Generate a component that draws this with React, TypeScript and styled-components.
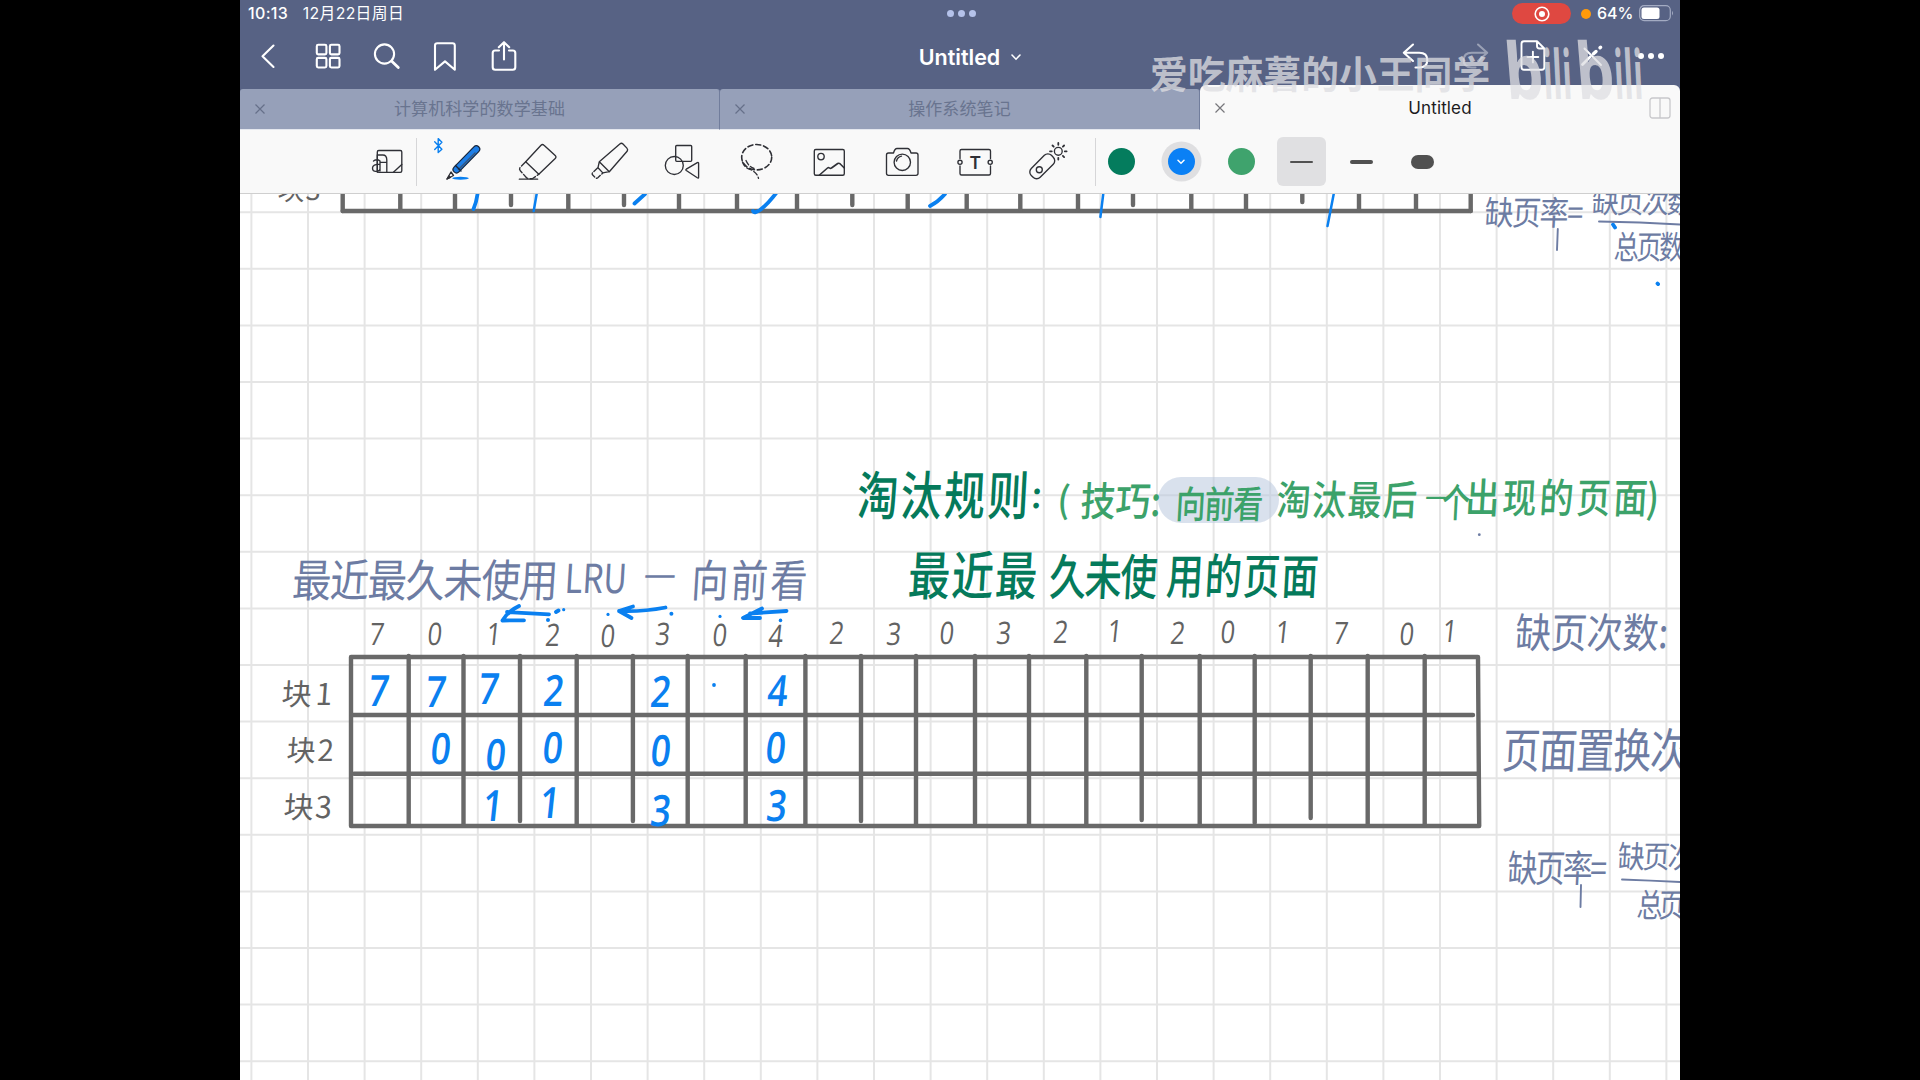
import React from "react";
import styled, { createGlobalStyle } from "styled-components";

const UI = `Inter, "Noto Sans CJK SC", sans-serif`;
const INK = { slate: "#6d7ca3", grey: "#636363", green: "#057a5b", leaf: "#3ca26a", blue: "#0a80f0" };

const Global = createGlobalStyle`
  html, body { margin: 0; background: #000; }
  *, *::before, *::after { box-sizing: border-box; }
`;

const Stage = styled.div`
  width: 1920px;
  height: 1080px;
  display: flex;
  justify-content: center;
  background: #000;
  overflow: hidden;
  font-family: ${UI};
`;
const Tablet = styled.main`
  position: relative;
  width: 1440px;
  height: 1080px;
  display: flex;
  flex-direction: column;
  background: #fff;
  overflow: hidden;
`;
const Header = styled.header`
  height: 130px;
  flex: none;
  display: flex;
  flex-direction: column;
  background: #576284;
  color: #fff;
`;
const StatusBar = styled.div`
  height: 27px;
  display: grid;
  grid-template-columns: 1fr auto 1fr;
  align-items: center;
  padding: 0 6px 0 8px;
  font-size: 16px;
  font-weight: 500;
  line-height: 27px;
`;
const Clock = styled.div`
  display: flex;
  gap: 14.5px;
  letter-spacing: 0.35px;
`;
const DateText = styled.span`
  font-weight: 400;
  font-size: 15.8px;
`;
const Dots = styled.div`
  display: flex;
  gap: 4px;
`;
const Dot = styled.i<{ $size: number; $color: string }>`
  width: ${(p) => p.$size}px;
  height: ${(p) => p.$size}px;
  border-radius: 50%;
  background: ${(p) => p.$color};
`;
const Indicators = styled.div`
  display: flex;
  justify-content: flex-end;
  align-items: center;
`;
const Recording = styled.div`
  width: 59px;
  height: 21px;
  border-radius: 11px;
  background: #df4841;
  display: grid;
  place-items: center;
  margin-right: 10px;
`;
const Percent = styled.span`
  margin: 0 6px 0 6px;
  width: 36px;
  white-space: nowrap;
`;
const NavBar = styled.nav`
  height: 58px;
  display: grid;
  grid-template-columns: 1fr auto 1fr;
  align-items: center;
`;
const NavGroup = styled.div<{ $end?: boolean }>`
  display: flex;
  justify-content: ${(p) => (p.$end ? "flex-end" : "flex-start")};
`;
const NavButton = styled.div<{ $dim?: boolean }>`
  width: 58.7px;
  height: 58px;
  flex: none;
  display: grid;
  place-items: center;
  opacity: ${(p) => (p.$dim ? 0.4 : 1)};
`;
const Title = styled.h1`
  margin: 2px 0 0 20px;
  display: flex;
  align-items: center;
  gap: 11px;
  font-size: 21.5px;
  font-weight: 600;
  line-height: 56px;
`;
const Tabs = styled.div`
  height: 45px;
  display: flex;
  align-items: flex-end;
`;
const Tab = styled.div<{ $active?: boolean }>`
  width: 480px;
  height: ${(p) => (p.$active ? 45 : 41)}px;
  display: grid;
  grid-template-columns: 40px 1fr 40px;
  align-items: center;
  justify-items: center;
  border-radius: ${(p) => (p.$active ? "6px 6px 0 0" : "3px 3px 0 0")};
  border-right: ${(p) => (p.$active ? "none" : "1px solid #717d9c")};
  border-bottom: ${(p) => (p.$active ? "none" : "1px solid #e4e7ee")};
  background: ${(p) => (p.$active ? "#f9f9f9" : "#96a0b9")};
  color: ${(p) => (p.$active ? "#1b1b1d" : "#69748f")};
  font-size: 17px;
  letter-spacing: 0.12px;
  line-height: 30px;
  padding-top: ${(p) => (p.$active ? 1 : 0)}px;
`;
const Toolbar = styled.div`
  height: 64px;
  flex: none;
  display: flex;
  align-items: center;
  padding-left: 120px;
  background: #f9f9f9;
  border-bottom: 1.5px solid #cfcfcf;
`;
const Tool = styled.div<{ $w: number }>`
  width: ${(p) => p.$w}px;
  height: 48px;
  flex: none;
  display: grid;
  place-items: center;
  margin-top: 1px;
`;
const Divider = styled.i<{ $l: number; $r: number }>`
  width: 1px;
  height: 48px;
  background: #d6d6d8;
  margin: 0 ${(p) => p.$r}px 0 ${(p) => p.$l}px;
`;
const Option = styled.div<{ $selected?: boolean }>`
  width: 49px;
  height: 49px;
  flex: none;
  margin-right: 11.2px;
  display: grid;
  place-items: center;
  border-radius: 6px;
  background: ${(p) => (p.$selected ? "#e0e0e2" : "transparent")};
`;
const Swatch = styled.i<{ $c: string; $ring?: boolean }>`
  width: 27px;
  height: 27px;
  border-radius: 50%;
  background: ${(p) => p.$c};
  box-shadow: ${(p) => (p.$ring ? "0 0 0 6.5px #dfdfe1" : "none")};
  display: grid;
  place-items: center;
`;
const Stroke = styled.i<{ $h: number }>`
  width: 23px;
  height: ${(p) => p.$h}px;
  border-radius: 8px;
  background: #515151;
`;
const Canvas = styled.section`
  position: relative;
  flex: 1;
  overflow: hidden;
  background: #fff;
`;
const Sheet = styled.svg`
  position: absolute;
  left: 0;
  top: 0;
  display: block;
`;
const Highlight = styled.div`
  position: absolute;
  left: 918px;
  top: 283px;
  width: 121px;
  height: 46px;
  border-radius: 23px;
  background: rgba(186, 200, 222, 0.55);
`;
/* Handwritten notes sit freely on the page; $x is the left edge, $y the vertical centre. */
const Note = styled.span<{ $x: number; $y: number; $size: number; $pitch?: number; $sx?: number; $sy?: number; $c: string; $w?: number; $skew?: number }>`
  position: absolute;
  left: ${(p) => p.$x - 240}px;
  top: ${(p) => p.$y - 196.5}px;
  font-family: "Noto Sans CJK SC", sans-serif;
  font-size: ${(p) => p.$size}px;
  line-height: 1;
  white-space: nowrap;
  font-weight: ${(p) => p.$w ?? 400};
  letter-spacing: ${(p) => (p.$pitch ? p.$pitch - p.$size : 0)}px;
  color: ${(p) => p.$c};
  transform-origin: 0 0;
  transform: scale(${(p) => p.$sx ?? 1}, ${(p) => p.$sy ?? 1}) translateY(-50%) skewX(${(p) => p.$skew ?? -4}deg);
`;
const Digit = styled.span<{ $x: number; $y: number; $size: number; $c: string; $w: number }>`
  position: absolute;
  left: ${(p) => p.$x - 240}px;
  top: ${(p) => p.$y - 195.5}px;
  font-family: "Open Sans", "Noto Sans", sans-serif;
  font-size: ${(p) => p.$size}px;
  font-weight: ${(p) => p.$w};
  line-height: 1;
  color: ${(p) => p.$c};
  transform: translate(-50%, -50%) skewX(-6deg) scaleX(0.82);
`;
const Watermark = styled.div`
  position: absolute;
  left: 910px;
  top: 33px;
  color: rgba(222, 222, 226, 0.76);
  font-family: "Noto Sans CJK SC", sans-serif;
  font-weight: 700;
  font-size: 37.8px;
  line-height: 78px;
  white-space: nowrap;
`;
const Brand = styled.div`
  position: absolute;
  left: 1266px;
  top: 34px;
  display: flex;
  align-items: baseline;
  color: rgba(222, 222, 226, 0.76);
  font-family: "Open Sans", sans-serif;
  font-weight: 700;
  line-height: 70px;
`;
const BrandPart = styled.span<{ $size: number; $sx: number; $w: number }>`
  display: block;
  width: ${(p) => p.$w}px;
  font-size: ${(p) => p.$size}px;
  transform-origin: 0 78%;
  transform: scaleX(${(p) => p.$sx}) skewX(6deg);
`;

const NavIcon = ({ children }: { children: React.ReactNode }) => (
  <svg width="34" height="34" viewBox="0 0 34 34" fill="none" stroke="#fff" strokeWidth="2.1" strokeLinecap="round" strokeLinejoin="round">
    {children}
  </svg>
);
const ToolIcon = ({ children }: { children: React.ReactNode }) => (
  <svg width="48" height="48" viewBox="0 0 48 48" fill="none" stroke="#2f3036" strokeWidth="1.35" strokeLinecap="round" strokeLinejoin="round" overflow="visible">
    {children}
  </svg>
);
const Close = ({ color }: { color: string }) => (
  <svg width="10" height="10" viewBox="0 0 10 10" stroke={color} strokeWidth="1.2">
    <path d="M.5.5l9 9M9.5.5l-9 9" />
  </svg>
);

const gridX = Array.from({ length: 26 }, (_, i) => 251.4 + i * 56.6);
const gridY = Array.from({ length: 16 }, (_, i) => 212.2 + i * 56.6);
const cols: [number, number][] = [
  [408.7, 825], [463.5, 825], [520, 821], [576.7, 825], [632.9, 821], [687.7, 825], [745.7, 825], [805.4, 825], [861, 821], [916, 825],
  [975, 823], [1029, 825], [1086.3, 825], [1141.7, 820], [1199.7, 825], [1254.7, 823], [1310.7, 818], [1367.7, 825], [1424.7, 825],
];
const upperCols: [number, number][] = [
  [342.7, 211], [400.3, 210], [455, 210], [511, 205], [568.3, 210], [624, 205], [679, 210], [737, 210], [797, 210], [852.3, 205], [907.7, 210],
  [966.7, 210], [1020.3, 210], [1078, 210], [1133, 205], [1191.3, 210], [1246, 210], [1302.3, 202], [1359, 210], [1416, 210], [1470.7, 211],
];
const dots: [number, number, number][] = [
  [563.7, 609.7, 1.6], [548, 620, 2], [608, 614.4, 1.6], [671.4, 613.7, 2], [720, 616.4, 1.6], [780.5, 620.4, 1.8], [714, 685, 1.9],
];
const header: [string, number, number][] = [
  ["7", 377, 634], ["0", 435, 634], ["1", 494, 634], ["2", 553, 635], ["0", 608, 636], ["3", 663, 634], ["0", 720, 635], ["4", 776, 636],
  ["2", 837, 633], ["3", 894, 634], ["0", 947, 633], ["3", 1004, 633], ["2", 1061, 632], ["1", 1115, 631], ["2", 1178, 633], ["0", 1228, 632],
  ["1", 1283, 632], ["7", 1341, 633], ["0", 1407, 634], ["1", 1450, 631],
];
const filled: [string, number, number][] = [
  ["7", 379, 690], ["7", 436, 691], ["7", 489, 688], ["2", 554, 690], ["2", 661, 691], ["4", 778, 690],
  ["0", 441, 748], ["0", 496, 754], ["0", 553, 747], ["0", 661, 750], ["0", 776, 747],
  ["1", 493, 805], ["1", 550, 802], ["3", 661, 810], ["3", 777, 805],
];

export default function App() {
  return (
    <Stage>
      <Global />
      <Tablet>
        <Header>
          <StatusBar>
            <Clock><span>10:13</span><DateText>12月22日周日</DateText></Clock>
            <Dots><Dot $size={7} $color="#b5c2ea" /><Dot $size={7} $color="#b5c2ea" /><Dot $size={7} $color="#b5c2ea" /></Dots>
            <Indicators>
              <Recording>
                <svg width="16" height="16" viewBox="0 0 16 16"><circle cx="8" cy="8" r="6.8" fill="none" stroke="#fff" strokeWidth="1.6" /><circle cx="8" cy="8" r="3" fill="#fff" /></svg>
              </Recording>
              <Dot $size={10} $color="#ff9a0a" />
              <Percent>64%</Percent>
              <svg width="35" height="17" viewBox="0 0 35 17">
                <rect x=".7" y=".7" width="30.6" height="15" rx="4.5" fill="none" stroke="#a3abc2" strokeWidth="1.2" />
                <rect x="2.5" y="2.5" width="18" height="11.4" rx="2.5" fill="#fff" />
                <path d="M33 5.8q2 2.4 0 4.8z" fill="#a3abc2" />
              </svg>
            </Indicators>
          </StatusBar>
          <NavBar>
            <NavGroup>
              <NavButton><NavIcon><path d="M21.500 6.500L10.500 17.300l11 10.700" /></NavIcon></NavButton>
              <NavButton><NavIcon><rect x="5.8" y="5.8" width="9.600" height="9.600" rx="1.400" /><rect x="18.900" y="5.800" width="9.600" height="9.600" rx="1.400" /><rect x="5.800" y="18.900" width="9.600" height="9.600" rx="1.400" /><rect x="18.900" y="18.900" width="9.600" height="9.600" rx="1.400" /></NavIcon></NavButton>
              <NavButton><NavIcon><circle cx="14.500" cy="15" r="9.600" /><path d="M21.800 22.300l6.500 6.300" strokeWidth="2.800" /></NavIcon></NavButton>
              <NavButton><NavIcon><path d="M7 6.500q0-2.300 2.300-2.300h15.200q2.300 0 2.300 2.300v24.300L17 22.400 7 30.800z" /></NavIcon></NavButton>
              <NavButton><NavIcon><path d="M12 11.500H8.200q-2.500 0-2.500 2.500v14.200q0 2.500 2.500 2.500h17.600q2.500 0 2.500-2.500V14q0-2.500-2.500-2.500H22M17 20.500V3.500M11.800 8.200L17 3.200l5.200 5" /></NavIcon></NavButton>
            </NavGroup>
            <Title>Untitled<svg width="10" height="7" viewBox="0 0 10 7" fill="none" stroke="#fff" strokeWidth="1.6" strokeLinecap="round"><path d="M1 1l4 4.200 4-4.200" /></svg></Title>
            <NavGroup $end>
              <NavButton><NavIcon><path d="M14 5.500L4.800 13.800 14 22M5.500 13.800h14.800q8 0 8 7.200t-8 7.500h-3.800" /></NavIcon></NavButton>
              <NavButton $dim><NavIcon><path d="M20 5.500l9.200 8.300L20 22M28.500 13.800H13.700q-8 0-8 7.200t8 7.500h3.800" /></NavIcon></NavButton>
              <NavButton><NavIcon><path d="M8 2.200h13l7.300 7.300v18.800q0 2.500-2.500 2.500H8q-2.500 0-2.500-2.500V4.700q0-2.500 2.500-2.500zM21 2.200v4.800q0 2.500 2.500 2.500h4.800M16.900 12.600v10.800M11.500 18h10.800" strokeWidth="1.900" /></NavIcon></NavButton>
              <NavButton><NavIcon><path d="M9.500 9.500l16.500 16.500" strokeWidth="1.900" /><path d="M7.500 25.500l7.500-7.500" strokeWidth="2.800" /><path d="M18.500 14.800l2.500-2.300M25 8.800l.6-.6" strokeWidth="3.400" /></NavIcon></NavButton>
              <NavButton><Dots><Dot $size={6} $color="#fff" /><Dot $size={6} $color="#fff" /><Dot $size={6} $color="#fff" /></Dots></NavButton>
            </NavGroup>
          </NavBar>
          <Tabs>
            <Tab><Close color="#667089" /><span>计算机科学的数学基础</span></Tab>
            <Tab><Close color="#667089" /><span>操作系统笔记</span></Tab>
            <Tab $active>
              <Close color="#77777b" />
              <span>Untitled</span>
              <svg width="22" height="22" viewBox="0 0 22 22" fill="none" stroke="#c8c8cb" strokeWidth="1.300"><rect x="1" y="1" width="20" height="20" rx="2.500" /><path d="M11 1v20" /></svg>
            </Tab>
          </Tabs>
        </Header>

        <Toolbar>
          <Tool $w={54}>
            <ToolIcon>
              <rect x="14.300" y="12.500" width="24.500" height="21.800" rx="1.500" />
              <path d="M14.300 17h5.500q4 0 4 5v12.300M14.300 34.300V17M10.500 23q3.500-2.500 6.500 0M17 24.300h6.500M17 23v10M17 26.500q-7.500-.5-7.500 3.500 0 3.800 4 3.300t3.500-3.300M38.800 26.500l-8.400 7.800" />
            </ToolIcon>
          </Tool>
          <Divider $l={2} $r={10} />
          <Tool $w={73.1}>
            <ToolIcon>
              <path d="M-5.300 3.800l7.200 7.400-3.700 3.400V.600L1.900 4.300l-7.200 7.200" stroke="#0a80f0" strokeWidth="1.400" />
              <ellipse cx="20.500" cy="40.300" rx="8.300" ry="1.500" fill="#0a80f0" stroke="none" />
              <path d="M16.500 31.500L36.300 11.200" stroke="#17263c" strokeWidth="8" />
              <path d="M16.500 31.500L36.300 11.200" stroke="#1d7ee6" strokeWidth="5.600" />
              <path d="M18.500 31.500L35 15" stroke="#36557b" strokeWidth="1.500" />
              <path d="M15.500 27.500l5.500 5.500" stroke="#17263c" />
              <path d="M11 34l-4 7 6.500-3.500z" fill="#fff" /><path d="M9 38l-2 3 3.500-1.500z" fill="#222" />
            </ToolIcon>
          </Tool>
          <Tool $w={73.1}>
            <ToolIcon>
              <path d="M12.700 23.700L28 7.200q1.500-1.500 3 0l11.200 10.300q1.500 1.400 0 3L25.800 36.300z" />
              <path d="M12.700 23.700l-5.400 5.500q-1.500 1.800 0 3.500l6 6.800q1 1.200 3 1.200h3l6.500-4.400" strokeDasharray="6 2.200" />
              <path d="M6.300 41.200h18.400" strokeWidth="1.200" />
            </ToolIcon>
          </Tool>
          <Tool $w={73.1}>
            <ToolIcon>
              <path d="M13.300 23.700L33.800 6q1.700-1.400 3.200.1l3.900 4q1.400 1.500.2 3.200L23.300 33.700l-10-10zM13.300 23.700l-1.300 6 4.800 5.200 6.500-1.200" />
              <path d="M11.500 30l-5 4.800q-.8 1 0 2l3 3q1.200 1 2.300 0l4.800-4.600" strokeDasharray="5 2" />
            </ToolIcon>
          </Tool>
          <Tool $w={73.1}>
            <ToolIcon><rect x="16.700" y="7.500" width="16" height="15.800" rx="1" /><circle cx="15.300" cy="27.500" r="9" /><path d="M27.300 31.200l11-6.600q1.300-.6 1.300.8v13.800q0 1.400-1.300.6l-11-7.300q-.9-.7 0-1.300z" /></ToolIcon>
          </Tool>
          <Tool $w={73.1}>
            <ToolIcon><ellipse cx="24.700" cy="19.200" rx="15" ry="12.700" strokeDasharray="5 3" strokeWidth="1.600" /><path d="M10.500 24q2 6 8 7.500 6.500 3 8 8.800M14 22.500q2.500 6 8 8" strokeDasharray="5 2.500" /></ToolIcon>
          </Tool>
          <Tool $w={73.1}>
            <ToolIcon><rect x="9.300" y="11.500" width="30" height="25.700" rx="1.500" /><circle cx="16" cy="18.600" r="3.200" /><path d="M14.500 37l8-7q1-.8 2 0t2 0l6.200-4.500q1.200-.7 2.300.2l4.300 4.300" strokeWidth="1.600" /></ToolIcon>
          </Tool>
          <Tool $w={73.1}>
            <ToolIcon><path d="M8.500 17q0-2 2-2h5q1.300-4.500 3.500-4.500h10.500q2.200 0 3.500 4.500h5q2 0 2 2v18.500q0 1.800-2 1.800H10.500q-2 0-2-1.800z" /><circle cx="24.300" cy="24.300" r="8.200" /><path d="M18.500 23q1-4 5-4.800" /></ToolIcon>
          </Tool>
          <Tool $w={73.1}>
            <ToolIcon>
              <path d="M9 20.500V13q0-1.500 1.500-1.500H38q1.500 0 1.500 1.500v7.500M9 28v7.500q0 1.500 1.500 1.500H38q1.500 0 1.500-1.500V28" />
              <circle cx="9" cy="24.300" r="2.100" /><circle cx="39.200" cy="24.300" r="2.100" />
              <text x="24.200" y="30.600" textAnchor="middle" fontSize="17.500" fontWeight="600" fontFamily="Inter, sans-serif" fill="#2f3036" stroke="none">T</text>
            </ToolIcon>
          </Tool>
          <Tool $w={73.1}>
            <ToolIcon>
              <rect x="4" y="22" width="28.500" height="12.600" rx="5" transform="rotate(-45 18.300 28.300)" /><circle cx="15.300" cy="31.700" r="3" />
              <circle cx="34.300" cy="13.300" r="3.900" /><path d="M34.300 6.800V5M34.300 21.600v-1.800M26 13.300h1.800M40.800 13.300h1.800M28.500 7.500l1.200 1.200M40.100 7.500l-1.200 1.200M40.100 19.100l-1.200-1.200" strokeWidth="1.800" />
            </ToolIcon>
          </Tool>
          <Divider $l={10} $r={0.8} />
          <Option><Swatch $c="#047c5d" /></Option>
          <Option><Swatch $c="#0a80f5" $ring><svg width="8" height="6" viewBox="0 0 8 6" fill="none" stroke="#fff" strokeWidth="1.500" strokeLinecap="round"><path d="M1 1.200l3 3 3-3" /></svg></Swatch></Option>
          <Option><Swatch $c="#3fa36d" /></Option>
          <Option $selected><Stroke $h={2} /></Option>
          <Option><Stroke $h={4} /></Option>
          <Option><Stroke $h={14} /></Option>
        </Toolbar>

        <Canvas>
          <Sheet width="1440" height="886" viewBox="240 194 1440 886" fill="none">
            <g stroke="#e5e5e5" strokeWidth="2">
              {gridX.map((x) => <path key={x} d={`M${x} 194V1080`} />)}
              {gridY.map((y) => <path key={y} d={`M240 ${y}H1680`} />)}
            </g>
            <g stroke="#696969" strokeWidth="4.400" strokeLinecap="round" strokeLinejoin="round">
              <path d="M342.700 211H1470.700" />
              {upperCols.map(([x, y]) => <path key={x} d={`M${x} 190V${y}`} />)}
              <path d="M351 657H1478L1479.200 826H351z" />
              <path d="M352 715H1473M354 773.800H1478" />
              {cols.map(([x, y]) => <path key={x} d={`M${x} 656V${y}`} />)}
            </g>
            <g stroke={INK.blue} strokeWidth="3.800" strokeLinecap="round" strokeLinejoin="round">
              <path d="M478 190Q477 201 473.500 209M777 192Q768 204 760 210 754 214 753 211M645 194L634.500 203.500M945 194Q938 202 930 206" />
              <path d="M537 192L533.700 211M1103.500 192L1100.400 217M1334.500 190L1327.500 226" strokeWidth="2.500" />
              <path d="M549 614.400L507 612M519 606Q508 611 502.500 620.500L524 620.300" />
              <path d="M665.500 607.500Q642 612 619 611M633 606.500L619 611 631.500 618" />
              <path d="M786.500 611L750 613.500M762 608.500L743 618H760" />
              <path d="M556 612l2.500-1.500M1613 224.500l2 3M1657.500 283.500l.6.600" />
            </g>
            <g fill={INK.blue}>{dots.map(([x, y, r]) => <circle key={x} cx={x} cy={y} r={r} />)}</g>
            <circle cx="1479.300" cy="534.700" r="1.400" fill={INK.slate} />
            <path d="M1599 221.500Q1640 222 1680 224.500M1622 879.500Q1650 880.500 1680 882M1557.800 229L1557 250M1581 885L1580.500 907" stroke={INK.slate} strokeWidth="1.900" strokeLinecap="round" />
          </Sheet>
          <Highlight />

          <Note $x={279} $y={190} $size={27} $pitch={28} $c={INK.grey}>块3</Note>
          <Note $x={1486} $y={213} $size={29} $pitch={27.5} $sy={1.15} $c={INK.slate}>缺页率=</Note>
          <Note $x={1593} $y={202} $size={27} $pitch={25} $sy={1.1} $c={INK.slate}>缺页次数</Note>
          <Note $x={1615} $y={247} $size={25} $pitch={22.5} $sy={1.3} $c={INK.slate}>总页数</Note>

          <Note $x={859} $y={495} $size={41} $pitch={43.5} $sy={1.28} $w={500} $c={INK.green}>淘汰规则</Note>
          <Note $x={1033} $y={494} $size={36} $w={500} $c={INK.green}>:</Note>
          <Note $x={1059} $y={499} $size={36} $w={500} $c={INK.leaf}>(</Note>
          <Note $x={1082} $y={500} $size={35} $pitch={35} $sy={1.15} $w={500} $c={INK.leaf}>技巧:</Note>
          <Note $x={1177} $y={504} $size={30} $pitch={28.7} $sy={1.25} $w={500} $c={INK.leaf}>向前看</Note>
          <Note $x={1278} $y={500} $size={34} $pitch={35.5} $sy={1.2} $w={500} $c={INK.leaf}>淘汰最后</Note>
          <Note $x={1426} $y={499} $size={21} $w={500} $c={INK.leaf}>一</Note>
          <Note $x={1443} $y={502} $size={28} $sy={1.4} $w={500} $c={INK.leaf}>个</Note>
          <Note $x={1467} $y={498} $size={34} $pitch={37} $sy={1.2} $w={500} $c={INK.leaf}>出现的页面</Note>
          <Note $x={1648} $y={497} $size={36} $sy={1.1} $w={500} $c={INK.leaf}>)</Note>
          <Note $x={910} $y={574} $size={42} $pitch={43.5} $sy={1.25} $w={500} $c={INK.green}>最近最</Note>
          <Note $x={1051} $y={577} $size={37} $pitch={35.5} $sy={1.32} $w={500} $c={INK.green}>久未使</Note>
          <Note $x={1168} $y={576} $size={37} $pitch={38.3} $sy={1.3} $w={500} $c={INK.green}>用的页面</Note>

          <Note $x={294} $y={580} $size={39} $pitch={37.8} $sy={1.15} $c={INK.slate}>最近最久未使用</Note>
          <Note $x={566} $y={578} $size={40} $sx={0.82} $c={INK.slate}>LRU</Note>
          <Note $x={645} $y={577} $size={32} $c={INK.slate}>一</Note>
          <Note $x={693} $y={580} $size={37} $pitch={39.5} $sy={1.2} $c={INK.slate}>向前看</Note>

          {header.map(([t, x, y]) => <Digit key={x} $x={x} $y={y} $size={31} $w={400} $c={INK.grey}>{t}</Digit>)}
          <Note $x={283} $y={694} $size={30} $pitch={34} $c={INK.grey}>块1</Note>
          <Note $x={288} $y={750} $size={29} $pitch={31} $c={INK.grey}>块2</Note>
          <Note $x={285} $y={807} $size={30} $pitch={31.5} $c={INK.grey}>块3</Note>
          {filled.map(([t, x, y]) => <Digit key={`${x}-${y}`} $x={x} $y={y} $size={43} $w={600} $c={INK.blue}>{t}</Digit>)}

          <Note $x={1517} $y={632} $size={36} $pitch={35.7} $sy={1.15} $c={INK.slate}>缺页次数:</Note>
          <Note $x={1504} $y={750} $size={38} $pitch={37} $sy={1.25} $c={INK.slate}>页面置换次</Note>
          <Note $x={1509} $y={868} $size={30} $pitch={27.5} $sy={1.25} $c={INK.slate}>缺页率=</Note>
          <Note $x={1619} $y={857} $size={27} $pitch={25} $sy={1.15} $c={INK.slate}>缺页次</Note>
          <Note $x={1638} $y={905} $size={26} $pitch={22} $sy={1.25} $c={INK.slate}>总页</Note>
        </Canvas>
        <Watermark>爱吃麻薯的小王同学</Watermark>
        <Brand>
          <BrandPart $size={78} $sx={0.78} $w={38}>b</BrandPart>
          <BrandPart $size={68} $sx={0.46} $w={33}>ili</BrandPart>
          <BrandPart $size={78} $sx={0.78} $w={38}>b</BrandPart>
          <BrandPart $size={68} $sx={0.46} $w={33}>ili</BrandPart>
        </Brand>
      </Tablet>
    </Stage>
  );
}
